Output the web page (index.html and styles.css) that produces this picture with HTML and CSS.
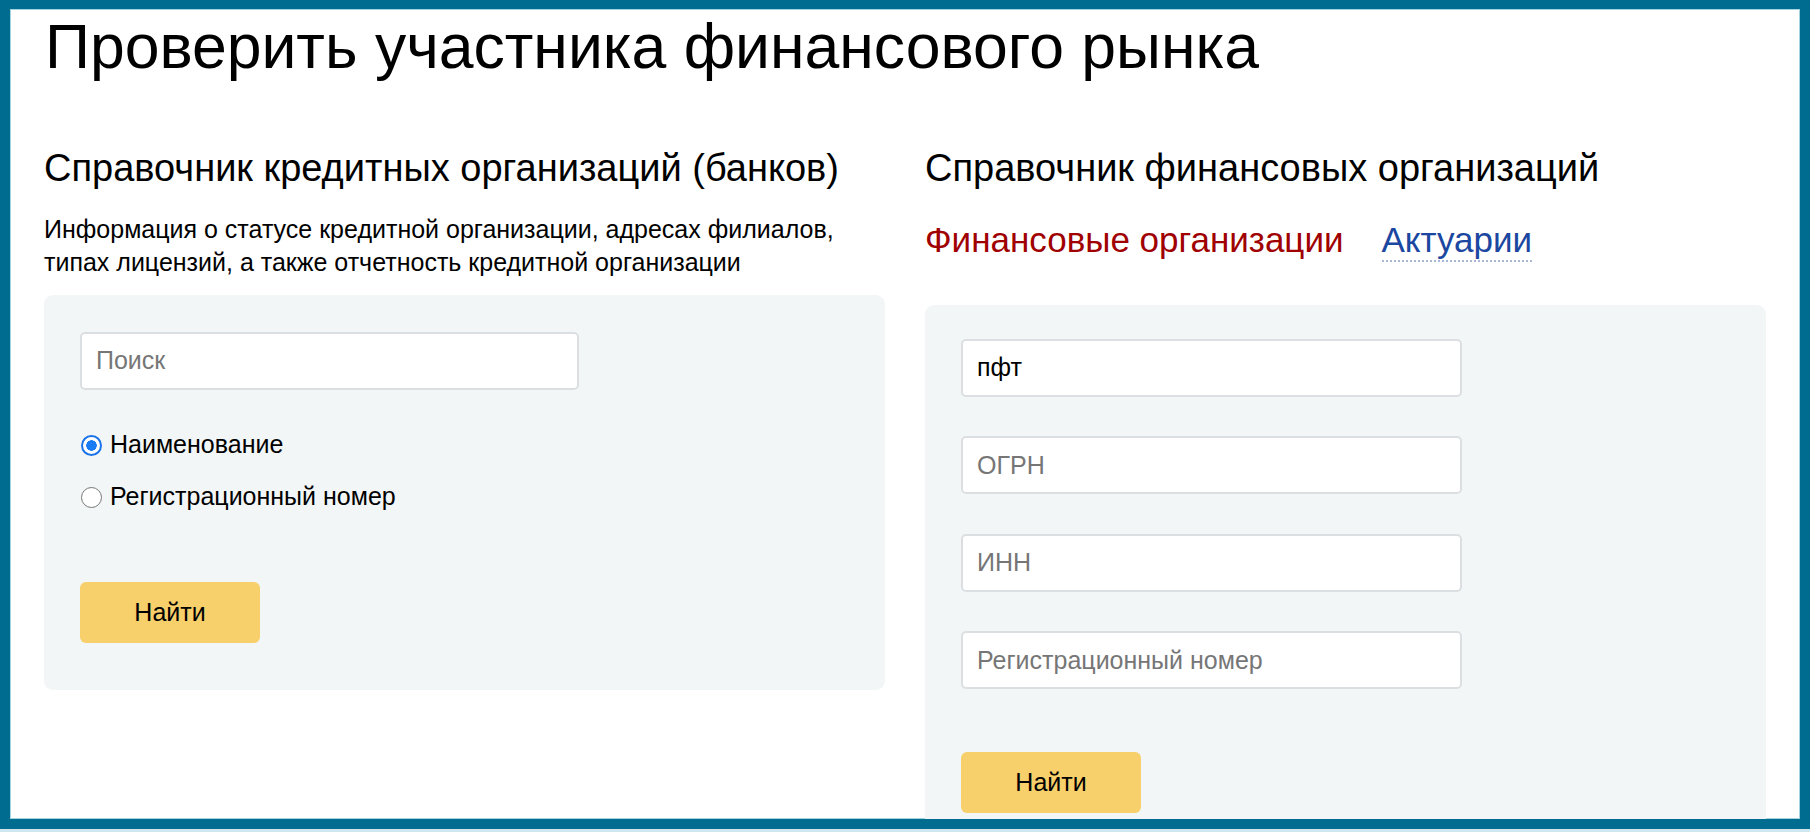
FILE: index.html
```html
<!DOCTYPE html>
<html lang="ru">

<head>
  <meta charset="utf-8">
  <title>Проверить участника финансового рынка</title>
  <link rel="stylesheet" href="styles.css">
</head>

<body>
  <div class="frame">
    <h1 class="page-title">Проверить участника финансового рынка</h1>

    <div class="columns">
      <section class="col">
        <h2 class="col-title">Справочник кредитных организаций (банков)</h2>
        <p class="col-desc">Информация о статусе кредитной организации, адресах филиалов, типах лицензий, а также отчетность кредитной организации</p>

        <form class="panel panel-banks">
          <input class="field field-wide" type="text" placeholder="Поиск">

          <div class="radios">
            <label class="radio"><input type="radio" name="by" checked> Наименование</label>
            <label class="radio"><input type="radio" name="by"> Регистрационный номер</label>
          </div>

          <button class="btn" type="button">Найти</button>
        </form>
      </section>

      <section class="col">
        <h2 class="col-title">Справочник финансовых организаций</h2>
        <div class="tabs">
          <span class="tab tab-active">Финансовые организации</span>
          <a class="tab tab-link" href="#">Актуарии</a>
        </div>

        <form class="panel panel-fin">
          <input class="field" type="text" value="пфт">
          <input class="field" type="text" placeholder="ОГРН">
          <input class="field" type="text" placeholder="ИНН">
          <input class="field" type="text" placeholder="Регистрационный номер">

          <button class="btn" type="button">Найти</button>
        </form>
      </section>
    </div>
  </div>
</body>

</html>
```

FILE: styles.css
```css
body {
  margin: 0;
  background: #cfe6ee;
  font-family: "Liberation Sans", Arial, Helvetica, sans-serif;
  color: #000;
}

.frame {
  box-sizing: border-box;
  height: 829px;
  border: 10px solid #006c8f;
  border-top-width: 9px;
  background: #fff;
  box-shadow: inset 0 0 0 1px #a3d2e1;
  overflow: hidden;
}

.page-title {
  margin: 6px 0 0;
  padding-left: 35px;
  font-size: 62.5px;
  font-weight: normal;
  line-height: 1;
}

.columns {
  display: grid;
  grid-template-columns: 841px 841px;
  column-gap: 40px;
  padding-left: 34px;
  margin-top: 68px;
}

.col-title {
  margin: 0;
  font-size: 38px;
  font-weight: normal;
  line-height: 44px;
}

.col-desc {
  margin: 23px 0 16px;
  font-size: 25px;
  line-height: 33px;
}

/* Grey search panels */
.panel {
  background: #f3f6f7;
  border-radius: 9px;
  padding: 37px 36px 47px;
}

.panel-fin {
  display: flex;
  flex-direction: column;
  align-items: flex-start;
  gap: 39.5px;
  padding-top: 34px;
  padding-bottom: 60px;
}

.field {
  box-sizing: border-box;
  display: block;
  width: 501px;
  height: 58px;
  padding: 0 14px;
  border: 2px solid #dcdfe2;
  border-radius: 5px;
  background: #fff;
  font-family: inherit;
  font-size: 25px;
  color: #000;
  outline: none;
}

.field-wide {
  width: 499px;
}

.field::placeholder {
  color: #767676;
}

.radios {
  display: flex;
  flex-direction: column;
  gap: 22px;
  margin-top: 40px;
}

.radio {
  display: flex;
  align-items: center;
  gap: 8px;
  height: 30px;
  font-size: 25px;
}

.radio input {
  appearance: none;
  box-sizing: border-box;
  width: 21px;
  height: 21px;
  margin: 2px 0 0 1px;
  border: 1.5px solid #767676;
  border-radius: 50%;
  background: #fff;
}

.radio input:checked {
  border: 2px solid #1a73e8;
  background: radial-gradient(circle, #1a7cf5 0 5px, #fff 5.5px);
}

.btn {
  display: block;
  width: 180px;
  height: 61px;
  margin-top: 70px;
  border: 0;
  border-radius: 6px;
  background: #f7d06b;
  font-family: inherit;
  font-size: 25px;
  color: #000;
}

.panel-fin .btn {
  margin-top: 23px;
}

.tabs {
  display: flex;
  gap: 38px;
  margin: 29px 0 43px;
  font-size: 35px;
  line-height: 41px;
}

.tab-active {
  color: #a00000;
}

.tab-link {
  color: #1b47a0;
  text-decoration: none;
  border-bottom: 2px dotted #a7b8d6;
}
```
